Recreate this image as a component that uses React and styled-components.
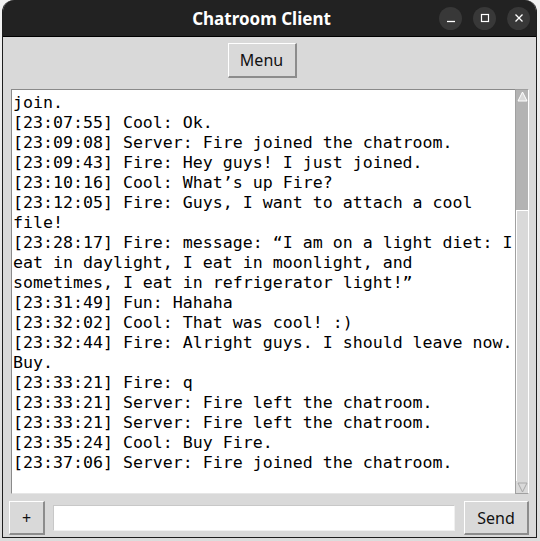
import React from "react"
import styled, { createGlobalStyle } from "styled-components"

const messages = [
  ["join."],
  ["[23:07:55] Cool: Ok."],
  ["[23:09:08] Server: Fire joined the chatroom."],
  ["[23:09:43] Fire: Hey guys! I just joined."],
  ["[23:10:16] Cool: What\u2019s up Fire?"],
  ["[23:12:05] Fire: Guys, I want to attach a cool", "file!"],
  [
    "[23:28:17] Fire: message: \u201cI am on a light diet: I",
    "eat in daylight, I eat in moonlight, and",
    "sometimes, I eat in refrigerator light!\u201d",
  ],
  ["[23:31:49] Fun: Hahaha"],
  ["[23:32:02] Cool: That was cool! :)"],
  ["[23:32:44] Fire: Alright guys. I should leave now.", "Buy."],
  ["[23:33:21] Fire: q"],
  ["[23:33:21] Server: Fire left the chatroom."],
  ["[23:33:21] Server: Fire left the chatroom."],
  ["[23:35:24] Cool: Buy Fire."],
  ["[23:37:06] Server: Fire joined the chatroom."],
]

const App = () => {
  return (
    <>
      <GlobalStyle />
      <Desktop>
        <Window>
          <TitleBar>
            <Title>Chatroom Client</Title>
            <Controls>
              <CircleButton>
                <svg width="10" height="10" viewBox="0 0 10 10">
                  <line x1="1" y1="8.5" x2="9" y2="8.5" stroke="#fff" strokeWidth="1.3" />
                </svg>
              </CircleButton>
              <CircleButton>
                <svg width="10" height="10" viewBox="0 0 10 10">
                  <rect x="1.5" y="1.5" width="7" height="7" fill="none" stroke="#fff" strokeWidth="1.2" />
                </svg>
              </CircleButton>
              <CircleButton>
                <svg width="10" height="10" viewBox="0 0 10 10">
                  <path d="M1.5 1.5 L8.5 8.5 M8.5 1.5 L1.5 8.5" stroke="#fff" strokeWidth="1.3" />
                </svg>
              </CircleButton>
            </Controls>
          </TitleBar>

          <Body>
            <MenuRow>
              <TkButton $w={69} $h={35}>Menu</TkButton>
            </MenuRow>

            <ChatRow>
              <ChatLog>
                {messages.map((msg, i) =>
                  msg.map((line, j) => <Line key={i + "-" + j}>{line}</Line>)
                )}
              </ChatLog>
              <Scrollbar>
                <Arrow>
                  <svg width="11" height="11" viewBox="0 0 11 11">
                    <path d="M5.5 1 L10 10 L1 10 Z" fill="#d9d9d9" stroke="#fff" strokeWidth="1" />
                  </svg>
                </Arrow>
                <Thumb />
                <Trough />
                <Arrow $down>
                  <svg width="11" height="11" viewBox="0 0 11 11">
                    <path d="M1 1 L10 1 L5.5 10 Z" fill="#d9d9d9" stroke="#a8a8a8" strokeWidth="1" />
                  </svg>
                </Arrow>
              </Scrollbar>
            </ChatRow>

            <InputRow>
              <TkButton $w={36} $h={34}>+</TkButton>
              <Entry />
              <TkButton $w={65} $h={34}>Send</TkButton>
            </InputRow>
          </Body>
        </Window>
      </Desktop>
    </>
  )
}

const GlobalStyle = createGlobalStyle`
  html, body {
    margin: 0;
    padding: 0;
    background: #ececec;
  }
`

const Desktop = styled.div`
  width: 540px;
  height: 541px;
  overflow: hidden;
  background: linear-gradient(#f2f2f2, #dcdcdc);
`

const Window = styled.div`
  margin-left: 2px;
  width: 535px;
  height: 538px;
  box-sizing: border-box;
  border: 1px solid #1e1e1e;
  border-top: none;
  border-radius: 12px 12px 0 0;
  overflow: hidden;
  background: #d9d9d9;
  display: flex;
  flex-direction: column;
`

const TitleBar = styled.div`
  height: 36px;
  flex-shrink: 0;
  background: #222222;
  border-bottom: 1px solid #000;
  display: flex;
  align-items: center;
  padding: 0 6px 0 81px;
`

const Title = styled.div`
  flex: 1;
  text-align: center;
  color: #ffffff;
  font-family: "Noto Sans", "Open Sans", sans-serif;
  font-weight: 700;
  font-size: 17px;
`

const Controls = styled.div`
  display: flex;
  gap: 11px;
`

const CircleButton = styled.div`
  width: 23px;
  height: 23px;
  border-radius: 50%;
  background: #383838;
  display: flex;
  align-items: center;
  justify-content: center;
`

const Body = styled.div`
  flex: 1;
  display: flex;
  flex-direction: column;
  padding: 6px 7px 0 6px;
`

const MenuRow = styled.div`
  display: flex;
  justify-content: center;
  padding-right: 14px;
  margin-bottom: 11px;
`

const TkButton = styled.div`
  width: ${(p) => p.$w}px;
  height: ${(p) => p.$h}px;
  box-sizing: border-box;
  background: #d9d9d9;
  border-top: 1px solid #ffffff;
  border-left: 1px solid #ffffff;
  border-right: 2px solid #8c8c8c;
  border-bottom: 2px solid #8c8c8c;
  display: flex;
  align-items: center;
  justify-content: center;
  font-family: "Noto Sans", "Open Sans", sans-serif;
  font-size: 16px;
  color: #111;
  flex-shrink: 0;
`

const ChatRow = styled.div`
  display: flex;
  height: 405px;
`

const ChatLog = styled.div`
  width: 504px;
  box-sizing: border-box;
  margin-left: 2px;
  background: #ffffff;
  border-top: 1px solid #8a8a8a;
  border-left: 1px solid #8a8a8a;
  border-bottom: 1px solid #e6e6e6;
  padding: 3px 0 0 1px;
  overflow: hidden;
`

const Line = styled.div`
  font-family: "DejaVu Sans Mono", monospace;
  font-size: 16.6px;
  line-height: 20px;
  height: 20px;
  color: #000;
  white-space: pre;
`

const Scrollbar = styled.div`
  width: 14px;
  box-sizing: border-box;
  border: 1px solid #a0a0a0;
  border-right-color: #ffffff;
  background: #d9d9d9;
  display: flex;
  flex-direction: column;
`

const Arrow = styled.div`
  height: 12px;
  flex-shrink: 0;
  background: ${(p) => (p.$down ? "#d9d9d9" : "#b3b3b3")};
  display: flex;
  align-items: center;
  justify-content: center;
`

const Thumb = styled.div`
  height: 108px;
  flex-shrink: 0;
  background: #b3b3b3;
  border-bottom: 1px solid #ffffff;
`

const Trough = styled.div`
  flex: 1;
  background: #d9d9d9;
  border-left: 1px solid #ffffff;
`

const InputRow = styled.div`
  display: flex;
  align-items: center;
  margin-top: 7px;
`

const Entry = styled.div`
  width: 404px;
  height: 26px;
  box-sizing: border-box;
  margin: 0 9px 0 8px;
  background: #ffffff;
  border-top: 1px solid #c8c8c8;
  border-left: 1px solid #c8c8c8;
  border-right: 1px solid #f0f0f0;
  border-bottom: 1px solid #f0f0f0;
`

export default App
